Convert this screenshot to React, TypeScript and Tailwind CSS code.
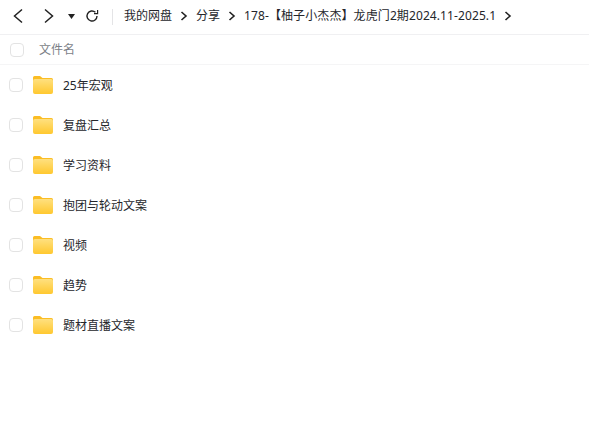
import React from 'react';

const crumbs = ['我的网盘', '分享', '178-【柚子小杰杰】龙虎门2期2024.11-2025.1'];
const folders = ['25年宏观', '复盘汇总', '学习资料', '抱团与轮动文案', '视频', '趋势', '题材直播文案'];

const Chevron: React.FC = () => (
    <svg width="8" height="10" viewBox="0 0 8 10" fill="none" stroke="#222" strokeWidth="1.6" className="shrink-0">
        <path d="M1.5 1l4.5 4-4.5 4" />
    </svg>
);

const Folder: React.FC = () => (
    <svg width="20" height="18" viewBox="0 0 20 18" className="shrink-0">
        <defs>
            <linearGradient id="fold" x1="0" y1="0" x2="0" y2="1">
                <stop offset="0" stopColor="#ffe07f" />
                <stop offset="1" stopColor="#ffc82f" />
            </linearGradient>
        </defs>
        <path d="M0 1.5A1.5 1.5 0 0 1 1.5 0h5.5l2.5 2h9A1.5 1.5 0 0 1 20 3.5V8H0z" fill="#fbbd24" />
        <rect x="0" y="3" width="20" height="15" rx="2" fill="url(#fold)" />
    </svg>
);

const Check: React.FC = () => (
    <span className="w-[14px] h-[14px] rounded-[4px] border-[1.5px] border-[#e3e3e3] bg-white shrink-0" />
);

export default function App() {
    return (
        <div className="w-[589px] h-[425px] bg-white overflow-hidden font-['Noto_Sans','Noto_Sans_CJK_SC',sans-serif] text-[12px] leading-[18px] text-[#25262b]">
            <div className="h-[35px] flex items-center border-b border-[#f0f0f2]">
                <div className="w-[112px] flex items-center pl-[12px] pb-[2px]">
                    <svg width="12" height="16" viewBox="0 0 12 16" fill="none" stroke="#222" strokeWidth="1.5">
                        <path d="M10 1.5L2.5 8l7.5 6.5" />
                    </svg>
                    <svg width="12" height="16" viewBox="0 0 12 16" fill="none" stroke="#222" strokeWidth="1.5" className="ml-[19px]">
                        <path d="M2 1.5L9.5 8 2 14.5" />
                    </svg>
                    <svg width="7" height="5" viewBox="0 0 7 5" className="ml-[13px]">
                        <path d="M0 0h7L3.5 5z" fill="#222" />
                    </svg>
                    <svg width="14" height="14" viewBox="0 0 14 14" fill="none" stroke="#222" strokeWidth="1.4" className="ml-[10px]">
                        <path d="M12 7a5 5 0 1 1-1.6-3.7" />
                        <path d="M12.6 1v3.6H9" strokeWidth="1.2" />
                    </svg>
                </div>
                <div className="w-px h-[16px] bg-[#e4e4e6]" />
                <div className="flex items-center pl-[11px] pb-[2px]">
                    {crumbs.map((c, i) => (
                        <div key={c} className="flex items-center">
                            <span className={i === 2 ? 'whitespace-nowrap tracking-[0.1px]' : 'whitespace-nowrap'}>{c}</span>
                            <span className={i === 2 ? 'ml-[8px]' : 'mx-[8px]'}><Chevron /></span>
                        </div>
                    ))}
                </div>
            </div>
            <div className="h-[30px] flex items-center border-b border-[#f5f5f6] pl-[10px]">
                <Check />
                <span className="ml-[15px] text-[#7c7f87]">文件名</span>
            </div>
            <div className="flex flex-col">
                {folders.map(name => (
                    <div key={name} className="h-[40px] flex items-center pl-[9px]">
                        <Check />
                        <span className="ml-[10px]"><Folder /></span>
                        <span className="ml-[10px] pt-[2px]">{name}</span>
                    </div>
                ))}
            </div>
        </div>
    );
}
